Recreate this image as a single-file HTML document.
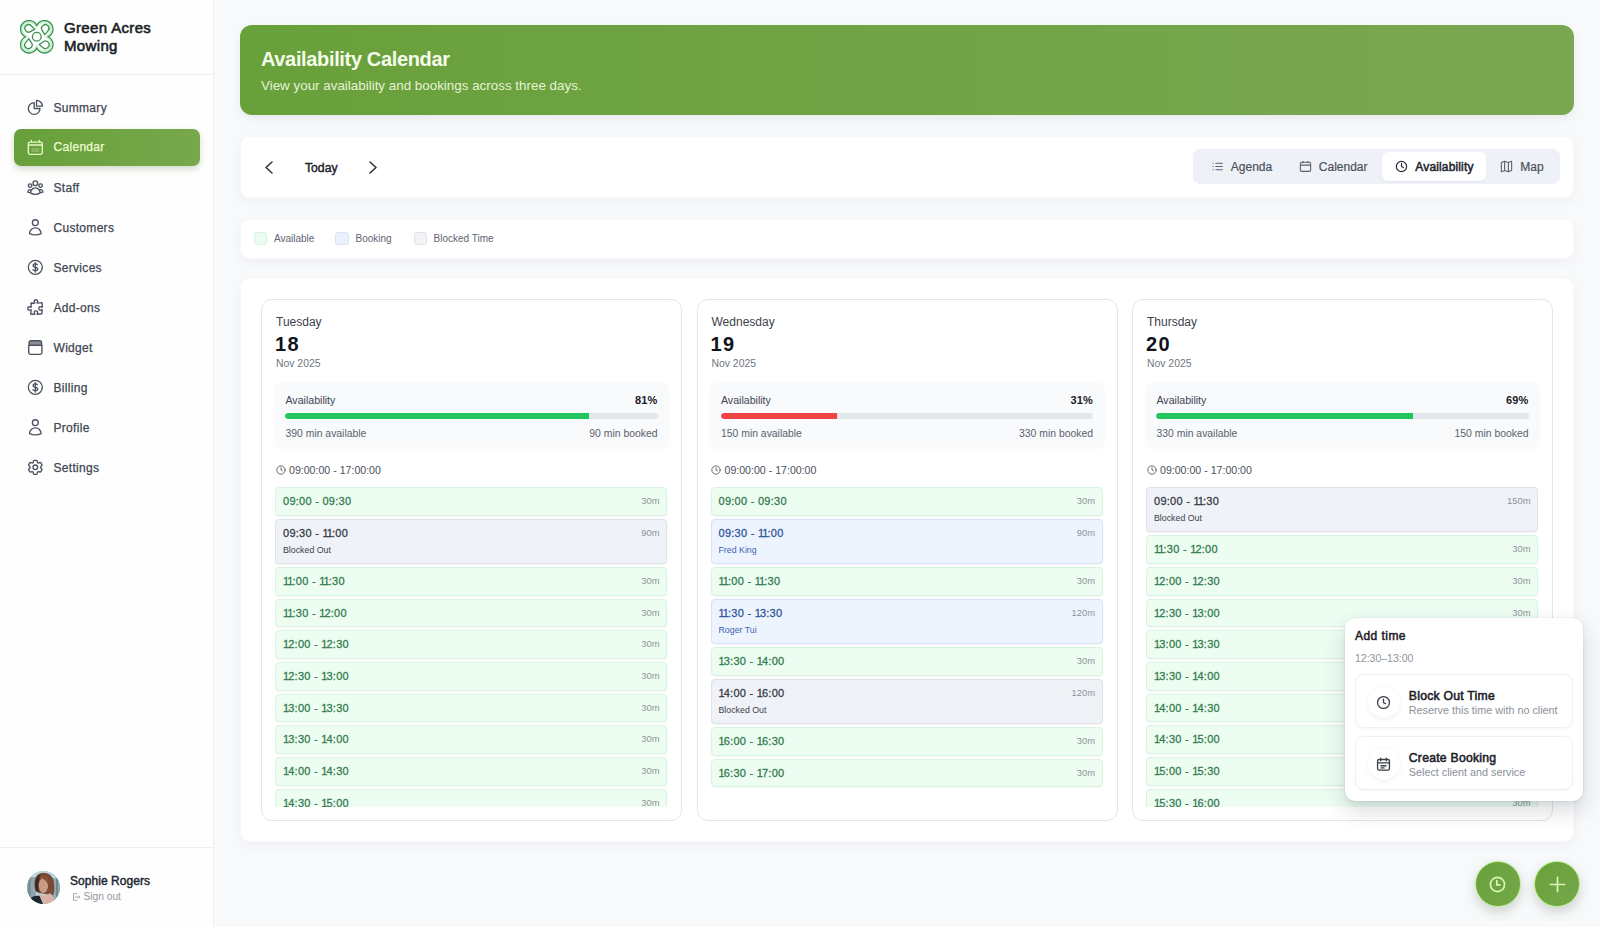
<!DOCTYPE html>
<html><head><meta charset="utf-8">
<style>
*{box-sizing:border-box;margin:0;padding:0}
html,body{width:1600px;height:927px;overflow:hidden}
body{font-family:"Liberation Sans",sans-serif;background:#f8f9fb;color:#111827;position:relative}
.abs{position:absolute}
svg{display:block}
/* sidebar */
.sb{position:absolute;left:0;top:0;width:214px;height:927px;background:#fefefe;border-right:1px solid #eef0f3}
.sb .hdr{position:absolute;left:0;top:0;width:213px;height:75px;border-bottom:1px solid #eceef1}
.logo{position:absolute;left:20px;top:20px;width:34px;height:34px}
.brand{position:absolute;left:64px;top:18.8px;font-size:15px;font-weight:400;line-height:18.6px;color:#1b1f27;letter-spacing:0.35px;-webkit-text-stroke:0.6px #1b1f27}
.nav{position:absolute;left:13.5px;width:186px;height:36.5px;border-radius:7px}
.nav .ic{position:absolute}
.nav .tx{position:absolute;left:40px;top:0;line-height:36.5px;font-size:12px;letter-spacing:0.3px;color:#3f4551;-webkit-text-stroke:0.25px #3f4551}
.nav.act{background:linear-gradient(90deg,#67a03a,#77a84c);box-shadow:0 3px 6px rgba(60,90,30,.22)}
.nav.act .tx{color:#eefcd3;-webkit-text-stroke:0.25px #eefcd3}
.user{position:absolute;left:0;top:847px;width:213px;border-top:1px solid #eceef1;height:80px}
.avatar{position:absolute;left:27px;top:871px;width:33px;height:33px;border-radius:50%;overflow:hidden;background:#8fb0bd}
.uname{position:absolute;left:70px;top:874.2px;font-size:12px;font-weight:400;color:#232833;-webkit-text-stroke:0.45px #232833;letter-spacing:0.05px}
.signout{position:absolute;left:71px;top:891px;font-size:10.2px;color:#9197a0}
/* main */
.banner{position:absolute;left:240px;top:25px;width:1334px;height:89.5px;border-radius:12px;background:linear-gradient(90deg,#68a03a 0%,#71a446 50%,#7aa752 100%);box-shadow:0 4px 10px rgba(15,23,42,.06)}
.banner h1{position:absolute;left:21px;top:22px;font-size:20px;font-weight:700;color:#f5fbea;letter-spacing:-0.35px;line-height:24px}
.banner p{position:absolute;left:21px;top:53px;font-size:13.4px;color:#e5f3d3;line-height:16px}
.card{position:absolute;background:#fff;border-radius:9px;border:1px solid rgba(15,23,42,.03);box-shadow:0 4px 12px rgba(15,23,42,.04)}
.toolbar{left:240px;top:136px;width:1334px;height:62px}
.legend{left:240px;top:218.5px;width:1334px;height:40px}
.calcard{left:240px;top:278px;width:1334px;height:564px}
.seg{position:absolute;left:952.3px;top:12.3px;width:367px;height:35px;border-radius:7px;background:#eef1f5}
.seg .pill{position:absolute;left:189px;top:3px;width:104px;height:29px;border-radius:6px;background:#fff;box-shadow:0 1px 2px rgba(0,0,0,.05)}
.seg .it{position:absolute;top:0.3px;line-height:35px;font-size:12px;color:#4a5261;-webkit-text-stroke:0.2px #4a5261}
.seg svg{position:absolute;top:10.5px;width:13px;height:13px}
.lg-sw{position:absolute;top:12.3px;width:13.5px;height:13.5px;border-radius:3px}
.lg-tx{position:absolute;top:-0.8px;line-height:39px;font-size:10px;color:#5e6573}
/* day cards */
.day{position:absolute;top:20px;width:421px;height:522px;border:1.5px solid #e4e6ea;border-radius:11px;background:#fff;overflow:hidden}
.day .dn{position:absolute;left:14px;top:15px;font-size:12px;color:#3c424d;line-height:14px}
.day .dd{position:absolute;left:13px;top:32.5px;font-size:20px;font-weight:700;color:#0f131a;line-height:22px;letter-spacing:1.3px}
.day .dm{position:absolute;left:14px;top:58px;font-size:10.4px;color:#70767f;line-height:12px}
.avbox{position:absolute;left:12.5px;top:83.3px;width:393.5px;height:64px;border-radius:6px;background:#f8fafc;box-shadow:0 1px 4px rgba(20,30,50,.04)}
.avbox .l{position:absolute;left:11px;top:10.7px;font-size:10.6px;color:#3e4450;line-height:12px}
.avbox .r{position:absolute;right:10.5px;top:10.5px;font-size:11px;letter-spacing:0.2px;font-weight:700;color:#1c2028;line-height:12px}
.avbox .bar{position:absolute;left:10.5px;top:30.2px;width:372.5px;height:6px;border-radius:3px;background:#e3e6ea;overflow:hidden}
.avbox .bar i{position:absolute;left:0;top:0;height:6px;border-radius:3px 0 0 3px}
.avbox .bl{position:absolute;left:11px;top:45px;font-size:10.4px;color:#5b616c;line-height:12px}
.avbox .br{position:absolute;right:10.5px;top:45px;font-size:10.4px;color:#5b616c;line-height:12px}
.hrs{position:absolute;left:14px;top:164px;font-size:10.6px;color:#4b515c;line-height:12px}
.hrs svg{position:absolute;left:-0.5px;top:0.5px}
.hrs span{margin-left:13px}
.list{position:absolute;left:13px;top:187px;width:393px;height:319.5px;overflow:hidden}
.sl{position:absolute;left:0;width:392px;border-radius:4px;border:1px solid #d9f3e1;background:#edfdf2;box-shadow:0 1px 1.5px rgba(15,23,42,.035)}
.sl .t{position:absolute;left:7px;top:7px;font-size:11px;font-weight:400;color:#337b4e;line-height:12px;letter-spacing:0.27px;-webkit-text-stroke:0.28px #337b4e}
.sl .m{position:absolute;right:6.5px;top:8px;font-size:9.4px;color:#8d939b;line-height:10px}
.sl .s{position:absolute;left:7px;top:25px;font-size:8.8px;color:#3b414b;line-height:10px}
.sl.bk{background:#eff2f7;border-color:#dde1e8}
.sl.bk .t{color:#353b46;-webkit-text-stroke-color:#353b46}
.sl.bo{background:#edf4fe;border-color:#d6e2f3}
.sl.bo .t{color:#2f559a;-webkit-text-stroke-color:#2f559a}
.sl.bo .s{color:#3a64b3}
.sl .t b.o{font-weight:inherit;letter-spacing:-0.95px}
.sh{height:28.66px}.lo{height:45.3px}
/* popover */
.pop{position:absolute;left:1345px;top:617.5px;width:238px;height:183.5px;background:#fff;border-radius:10px;box-shadow:0 10px 22px rgba(20,30,50,.16),0 2px 5px rgba(20,30,50,.06),0 0 0 1px rgba(0,0,0,.025)}
.pop .h{position:absolute;left:10px;top:11.5px;font-size:12px;font-weight:400;color:#1c2028;line-height:14px;letter-spacing:0.45px;-webkit-text-stroke:0.5px #1c2028}
.pop .tm{position:absolute;left:10px;top:34.3px;font-size:10.5px;color:#8d939b;line-height:12px}
.opt{position:absolute;left:10px;width:217.5px;height:54px;border-radius:9px;background:#fff;border:1px solid #eef0f3;box-shadow:0 1px 3px rgba(0,0,0,.03)}
.opt .c{position:absolute;left:11.5px;top:11px;width:32px;height:32px;border-radius:50%;background:#fff;box-shadow:0 1px 4px rgba(0,0,0,.07)}
.opt .c svg{position:absolute;left:8.5px;top:8.5px;width:15px;height:15px}
.opt .a{position:absolute;left:52.8px;top:13.9px;font-size:12.2px;font-weight:400;color:#1c2028;line-height:14px;letter-spacing:0.25px;-webkit-text-stroke:0.55px #1c2028}
.opt .b{position:absolute;left:52.8px;top:28.8px;font-size:10.8px;color:#8a9099;line-height:12px}
.fab{position:absolute;top:861px;width:46px;height:46px;border-radius:50%;background:linear-gradient(135deg,#68a03a,#74a84a);border:1px solid #b9ec8c;box-shadow:0 5px 12px rgba(40,60,30,.2)}
.fab svg{position:absolute;left:13.5px;top:13.5px}
</style></head><body>

<!-- SIDEBAR -->
<div class="sb">
  <div class="hdr"></div>
  <svg class="logo" viewBox="0 0 34 34" fill="none">
    <path d="M16.75 5.51A8.5 8.5 0 1 1 27.99 16.75A8.5 8.5 0 1 1 16.75 27.99A8.5 8.5 0 1 1 5.51 16.75A8.5 8.5 0 1 1 16.75 5.51Z" stroke="#c6f0cf" stroke-width="2.4" transform="translate(16.75 16.75) scale(0.9) translate(-16.75 -16.75)"/>
    <g stroke="#3a9150" stroke-width="1.3" stroke-linejoin="round">
    <path d="M16.75 5.51A8.5 8.5 0 1 1 27.99 16.75A8.5 8.5 0 1 1 16.75 27.99A8.5 8.5 0 1 1 5.51 16.75A8.5 8.5 0 1 1 16.75 5.51Z"/>
    <circle cx="16.8" cy="16.8" r="4.4"/>
    <path d="M14.76 9.14L10.44 11.61A3.7 3.7 0 1 1 11.15 5.72Z"/><path d="M24.68 14.57L22.13 10.30A3.7 3.7 0 1 1 28.03 10.89Z"/><path d="M8.71 18.71L11.48 22.84A3.7 3.7 0 1 1 5.55 22.55Z"/><path d="M19.21 24.49L23.34 21.72A3.7 3.7 0 1 1 23.05 27.65Z"/>
    </g>
  </svg>
  <div class="brand">Green Acres<br>Mowing</div>

  <div class="nav" style="top:89.5px">
    <svg class="ic" style="left:12.46px;top:8.91px;width:18.67px;height:18.67px" viewBox="0 0 24 24" fill="none" stroke="#4b5260" stroke-width="1.75" stroke-linecap="round" stroke-linejoin="round"><path d="M10.5 6a7.5 7.5 0 1 0 7.5 7.5h-7.5V6Z"/><path d="M13.5 10.5H21A7.5 7.5 0 0 0 13.5 3v7.5Z"/></svg>
    <div class="tx">Summary</div>
  </div>
  <div class="nav act" style="top:129.3px">
    <svg class="ic" style="left:12.46px;top:8.91px;width:18.67px;height:18.67px" viewBox="0 0 24 24" fill="none" stroke="#e6f9c4" stroke-width="1.75" stroke-linecap="round" stroke-linejoin="round"><path d="M6.75 3v2.25M17.25 3v2.25M3 18.75V7.5a2.25 2.25 0 0 1 2.25-2.25h13.5A2.25 2.25 0 0 1 21 7.5v11.25m-18 0A2.25 2.25 0 0 0 5.25 21h13.5A2.25 2.25 0 0 0 21 18.75m-18 0v-7.5A2.25 2.25 0 0 1 5.25 9h13.5A2.25 2.25 0 0 1 21 11.25v7.5"/><path d="M7 12.5h10v5.5H7z" fill="#8fb86a" stroke="none" opacity=".8"/></svg>
    <div class="tx">Calendar</div>
  </div>
  <div class="nav" style="top:169.5px">
    <svg class="ic" style="left:12.46px;top:8.91px;width:18.67px;height:18.67px" viewBox="0 0 24 24" fill="none" stroke="#4b5260" stroke-width="1.75" stroke-linecap="round" stroke-linejoin="round"><path d="M18 18.72a9.094 9.094 0 0 0 3.741-.479 3 3 0 0 0-4.682-2.72m.94 3.198.001.031c0 .225-.012.447-.037.666A11.944 11.944 0 0 1 12 21c-2.17 0-4.207-.576-5.963-1.584A6.062 6.062 0 0 1 6 18.719m12 0a5.971 5.971 0 0 0-.941-3.197m0 0A5.995 5.995 0 0 0 12 12.75a5.995 5.995 0 0 0-5.058 2.772m0 0a3 3 0 0 0-4.681 2.72 8.986 8.986 0 0 0 3.74.477m.94-3.197a5.971 5.971 0 0 0-.94 3.197M15 6.75a3 3 0 1 1-6 0 3 3 0 0 1 6 0Zm6 3a2.25 2.25 0 1 1-4.5 0 2.25 2.25 0 0 1 4.5 0Zm-13.5 0a2.25 2.25 0 1 1-4.5 0 2.25 2.25 0 0 1 4.5 0Z"/></svg>
    <div class="tx">Staff</div>
  </div>
  <div class="nav" style="top:209.5px">
    <svg class="ic" style="left:12.46px;top:8.91px;width:18.67px;height:18.67px" viewBox="0 0 24 24" fill="none" stroke="#4b5260" stroke-width="1.75" stroke-linecap="round" stroke-linejoin="round"><path d="M15.75 6a3.75 3.75 0 1 1-7.5 0 3.75 3.75 0 0 1 7.5 0ZM4.501 20.118a7.5 7.5 0 0 1 14.998 0A17.933 17.933 0 0 1 12 21.75c-2.676 0-5.216-.584-7.499-1.632Z"/></svg>
    <div class="tx">Customers</div>
  </div>
  <div class="nav" style="top:249.5px">
    <svg class="ic" style="left:12.46px;top:8.91px;width:18.67px;height:18.67px" viewBox="0 0 24 24" fill="none" stroke="#4b5260" stroke-width="1.75" stroke-linecap="round" stroke-linejoin="round"><path d="M12 6v12m-3-2.818.879.659c1.171.879 3.07.879 4.242 0 1.172-.879 1.172-2.303 0-3.182C13.536 12.219 12.768 12 12 12c-.725 0-1.45-.22-2.003-.659-1.106-.879-1.106-2.303 0-3.182s2.9-.879 4.006 0l.415.33M21 12a9 9 0 1 1-18 0 9 9 0 0 1 18 0Z"/></svg>
    <div class="tx">Services</div>
  </div>
  <div class="nav" style="top:289.5px">
    <svg class="ic" style="left:12.46px;top:8.91px;width:18.67px;height:18.67px" viewBox="0 0 24 24" fill="none" stroke="#4b5260" stroke-width="1.75" stroke-linecap="round" stroke-linejoin="round"><path d="M14.25 6.087c0-.355.186-.676.401-.959.221-.29.349-.634.349-1.003 0-1.036-1.007-1.875-2.25-1.875s-2.25.84-2.25 1.875c0 .369.128.713.349 1.003.215.283.401.604.401.959v0a.64.64 0 0 1-.657.643 48.39 48.39 0 0 1-4.163-.3c.186 1.613.293 3.25.315 4.907a.656.656 0 0 1-.658.663v0c-.355 0-.676-.186-.959-.401a1.647 1.647 0 0 0-1.003-.349c-1.036 0-1.875 1.007-1.875 2.25s.84 2.250 1.875 2.25c.369 0 .713-.128 1.003-.349.283-.215.604-.401.959-.401v0c.31 0 .555.26.532.57a48.039 48.039 0 0 1-.642 5.056c1.518.19 3.058.309 4.616.354a.64.64 0 0 0 .657-.643v0c0-.355-.186-.676-.401-.959a1.647 1.647 0 0 1-.349-1.003c0-1.035 1.008-1.875 2.25-1.875 1.243 0 2.25.84 2.25 1.875 0 .369-.128.713-.349 1.003-.215.283-.4.604-.4.959v0c0 .333.277.599.61.58a48.1 48.1 0 0 0 5.427-.63 48.05 48.05 0 0 0 .582-4.717.532.532 0 0 0-.533-.57v0c-.355 0-.676.186-.959.401-.29.221-.634.349-1.003.349-1.035 0-1.875-1.007-1.875-2.25s.84-2.25 1.875-2.25c.37 0 .713.128 1.003.349.283.215.604.401.96.401v0a.656.656 0 0 0 .658-.663 48.422 48.422 0 0 0-.37-5.360c-1.886.342-3.81.574-5.766.689a.578.578 0 0 1-.61-.58v0Z"/></svg>
    <div class="tx">Add-ons</div>
  </div>
  <div class="nav" style="top:329.5px">
    <svg class="ic" style="left:12.46px;top:8.91px;width:18.67px;height:18.67px" viewBox="0 0 24 24" fill="none" stroke="#4b5260" stroke-width="1.75" stroke-linecap="round" stroke-linejoin="round"><path d="M6.5 3.5h11a2.5 2.5 0 0 1 2.5 2.5V9.5H4V6a2.5 2.5 0 0 1 2.5-2.5Z" fill="#8a8f98"/><path d="M3.5 9.5h17v9a2.5 2.5 0 0 1-2.5 2.5H6a2.5 2.5 0 0 1-2.5-2.5Z"/></svg>
    <div class="tx">Widget</div>
  </div>
  <div class="nav" style="top:369.5px">
    <svg class="ic" style="left:12.46px;top:8.91px;width:18.67px;height:18.67px" viewBox="0 0 24 24" fill="none" stroke="#4b5260" stroke-width="1.75" stroke-linecap="round" stroke-linejoin="round"><path d="M12 6v12m-3-2.818.879.659c1.171.879 3.07.879 4.242 0 1.172-.879 1.172-2.303 0-3.182C13.536 12.219 12.768 12 12 12c-.725 0-1.45-.22-2.003-.659-1.106-.879-1.106-2.303 0-3.182s2.9-.879 4.006 0l.415.33M21 12a9 9 0 1 1-18 0 9 9 0 0 1 18 0Z"/></svg>
    <div class="tx">Billing</div>
  </div>
  <div class="nav" style="top:409.5px">
    <svg class="ic" style="left:12.46px;top:8.91px;width:18.67px;height:18.67px" viewBox="0 0 24 24" fill="none" stroke="#4b5260" stroke-width="1.75" stroke-linecap="round" stroke-linejoin="round"><path d="M15.75 6a3.75 3.75 0 1 1-7.5 0 3.75 3.75 0 0 1 7.5 0ZM4.501 20.118a7.5 7.5 0 0 1 14.998 0A17.933 17.933 0 0 1 12 21.75c-2.676 0-5.216-.584-7.499-1.632Z"/></svg>
    <div class="tx">Profile</div>
  </div>
  <div class="nav" style="top:449.5px">
    <svg class="ic" style="left:12.46px;top:8.91px;width:18.67px;height:18.67px" viewBox="0 0 24 24" fill="none" stroke="#4b5260" stroke-width="1.75" stroke-linecap="round" stroke-linejoin="round"><path d="M9.594 3.94c.09-.542.56-.94 1.11-.94h2.593c.55 0 1.02.398 1.11.94l.213 1.281c.063.374.313.686.645.87.074.04.147.083.22.127.325.196.72.257 1.075.124l1.217-.456a1.125 1.125 0 0 1 1.37.49l1.296 2.247a1.125 1.125 0 0 1-.26 1.431l-1.003.827c-.293.241-.438.613-.43.992a7.723 7.723 0 0 1 0 .255c-.008.378.137.75.43.991l1.004.827c.424.35.534.955.26 1.43l-1.298 2.247a1.125 1.125 0 0 1-1.369.491l-1.217-.456c-.355-.133-.75-.072-1.076.124a6.47 6.47 0 0 1-.22.128c-.331.183-.581.495-.644.869l-.213 1.281c-.09.543-.56.94-1.11.94h-2.594c-.55 0-1.019-.398-1.11-.94l-.213-1.281c-.062-.374-.312-.686-.644-.87a6.520 6.520 0 0 1-.22-.127c-.325-.196-.72-.257-1.076-.124l-1.217.456a1.125 1.125 0 0 1-1.369-.49l-1.297-2.247a1.125 1.125 0 0 1 .26-1.431l1.004-.827c.292-.24.437-.613.43-.991a6.932 6.932 0 0 1 0-.255c.007-.38-.138-.751-.43-.992l-1.004-.827a1.125 1.125 0 0 1-.26-1.43l1.297-2.247a1.125 1.125 0 0 1 1.37-.491l1.216.456c.356.133.751.072 1.076-.124.072-.044.146-.086.22-.128.332-.183.582-.495.644-.869l.214-1.28Z"/><path d="M15 12a3 3 0 1 1-6 0 3 3 0 0 1 6 0Z"/></svg>
    <div class="tx">Settings</div>
  </div>

  <div class="user"></div>
</div>
<div class="avatar">
  <svg width="33" height="33" viewBox="0 0 33 33">
    <defs><filter id="bl" x="-10%" y="-10%" width="120%" height="120%"><feGaussianBlur stdDeviation="0.55"/></filter></defs>
    <g filter="url(#bl)">
    <rect width="33" height="33" fill="#bcd9e3"/>
    <rect x="0" y="6" width="9" height="24" fill="#8fa6ae"/>
    <rect x="1.5" y="7" width="2" height="20" fill="#6f858d"/>
    <rect x="25" y="7" width="8" height="22" fill="#93aab3"/>
    <rect x="29" y="8" width="2" height="18" fill="#71878f"/>
    <path d="M7.5 14 C7 6 11 1.8 16.5 1.8 C22.5 1.8 27 6 27 13 C27.5 18 27.5 22 26 24 L21 23.5 L12 22 C9.5 21.5 8 19 7.5 14Z" fill="#7b4a36"/>
    <path d="M8 12 C8.5 7 11 4 14 3.5 C12 7 11.5 12 11.5 21 L9 20.5 C8.2 18 7.8 15 8 12Z" fill="#3e2a22"/>
    <ellipse cx="16.4" cy="14.5" rx="4.7" ry="7.4" fill="#c79c86"/>
    <path d="M12 6.5 C14 4.5 18 4.2 21 6 C22 9 21.5 12 21 14 C20 10 17 7.5 12 6.5Z" fill="#8a5038"/>
    <path d="M11 22 C13 25 20 25 23 22 L27 27 L27 33 L9 33 Z" fill="#d7b4a7"/>
    <path d="M3 28 C5 25 9 24.5 12.5 25 L16 33 L5 33Z" fill="#1e2832"/>
    </g>
  </svg>
</div>
<div class="uname">Sophie Rogers</div>
<svg class="abs" style="left:71px;top:892px" width="10" height="10" viewBox="0 0 24 24" fill="none" stroke="#a3a9b1" stroke-width="2.4" stroke-linecap="round" stroke-linejoin="round"><path d="M14 4H6v16h8M10 12h11M18 9l3 3-3 3"/></svg>
<div class="signout" style="left:83.5px">Sign out</div>

<!-- BANNER -->
<div class="banner">
  <h1>Availability Calendar</h1>
  <p>View your availability and bookings across three days.</p>
</div>

<!-- TOOLBAR -->
<div class="card toolbar">
  <svg class="abs" style="left:23.1px;top:23.8px" width="10" height="13" viewBox="0 0 10 13" fill="none" stroke="#2a2f38" stroke-width="1.5" stroke-linecap="round" stroke-linejoin="round"><path d="M8 1 2 6.5 8 12"/></svg>
  <div class="abs" style="left:64px;top:0;line-height:62px;font-size:12.2px;font-weight:400;color:#1d222b;-webkit-text-stroke:0.45px #1d222b">Today</div>
  <svg class="abs" style="left:126.6px;top:23.8px" width="10" height="13" viewBox="0 0 10 13" fill="none" stroke="#2a2f38" stroke-width="1.5" stroke-linecap="round" stroke-linejoin="round"><path d="M2 1 8 6.5 2 12"/></svg>
  <div class="seg">
    <div class="pill"></div>
    <svg style="left:17.5px" width="12" height="12" viewBox="0 0 24 24" fill="none" stroke="#5a6170" stroke-width="2" stroke-linecap="round"><path d="M9 6h12M9 12h12M9 18h12M3.5 6h.5M3.5 12h.5M3.5 18h.5"/></svg>
    <div class="it" style="left:37.5px">Agenda</div>
    <svg style="left:105.5px" width="12" height="12" viewBox="0 0 24 24" fill="none" stroke="#5a6170" stroke-width="2"><rect x="2.5" y="4" width="19" height="17" rx="2.5"/><path d="M2.5 9.5h19M7.5 2v4M16.5 2v4"/></svg>
    <div class="it" style="left:125.5px">Calendar</div>
    <svg style="left:202px" width="12" height="12" viewBox="0 0 24 24" fill="none" stroke="#262b35" stroke-width="2.2" stroke-linecap="round"><circle cx="12" cy="12" r="9.5"/><path d="M12 6.5V12l3.5 2"/></svg>
    <div class="it" style="left:222px;font-weight:400;color:#1d222b;-webkit-text-stroke:0.5px #1d222b;letter-spacing:0.15px">Availability</div>
    <svg style="left:307px" width="12" height="12" viewBox="0 0 24 24" fill="none" stroke="#5a6170" stroke-width="2" stroke-linejoin="round"><path d="M2.5 4.5 8.5 2.5l7 2 6-2v17l-6 2-7-2-6 2Z"/><path d="M8.5 2.5v17M15.5 4.5v17"/></svg>
    <div class="it" style="left:327px">Map</div>
  </div>
</div>

<!-- LEGEND -->
<div class="card legend">
  <div class="lg-sw" style="left:12.5px;background:#eafcf1;border:1px solid #d8f3e2"></div>
  <div class="lg-tx" style="left:33px">Available</div>
  <div class="lg-sw" style="left:94px;background:#ebf2fd;border:1px solid #d9e3f4"></div>
  <div class="lg-tx" style="left:114.5px">Booking</div>
  <div class="lg-sw" style="left:172.5px;background:#f1f3f6;border:1px solid #e0e3e8"></div>
  <div class="lg-tx" style="left:192.5px">Blocked Time</div>
</div>

<!-- CALENDAR -->
<div class="card calcard">
<div class="day" style="left:20px">
<div class="dn">Tuesday</div><div class="dd">18</div><div class="dm">Nov 2025</div>
<div class="avbox"><div class="l">Availability</div><div class="r">81%</div><div class="bar"><i style="width:81.5%;background:#22c55e"></i></div><div class="bl">390 min available</div><div class="br">90 min booked</div></div>
<div class="hrs"><svg width="10" height="10" viewBox="0 0 24 24" fill="none" stroke="#5f656f" stroke-width="2.3" stroke-linecap="round"><circle cx="12" cy="12" r="10"/><path d="M12 6.5V12l3.5 2"/></svg><span>09:00:00 - 17:00:00</span></div>
<div class="list">
<div class="sl sh" style="top:0.00px"><div class="t">09:00 - 09:30</div><div class="m">30m</div></div>
<div class="sl bk lo" style="top:31.66px"><div class="t">09:30 - <b class="o">1</b><b class="o">1</b>:00</div><div class="m">90m</div><div class="s">Blocked Out</div></div>
<div class="sl sh" style="top:79.96px"><div class="t"><b class="o">1</b><b class="o">1</b>:00 - <b class="o">1</b><b class="o">1</b>:30</div><div class="m">30m</div></div>
<div class="sl sh" style="top:111.62px"><div class="t"><b class="o">1</b><b class="o">1</b>:30 - <b class="o">1</b>2:00</div><div class="m">30m</div></div>
<div class="sl sh" style="top:143.28px"><div class="t"><b class="o">1</b>2:00 - <b class="o">1</b>2:30</div><div class="m">30m</div></div>
<div class="sl sh" style="top:174.94px"><div class="t"><b class="o">1</b>2:30 - <b class="o">1</b>3:00</div><div class="m">30m</div></div>
<div class="sl sh" style="top:206.60px"><div class="t"><b class="o">1</b>3:00 - <b class="o">1</b>3:30</div><div class="m">30m</div></div>
<div class="sl sh" style="top:238.26px"><div class="t"><b class="o">1</b>3:30 - <b class="o">1</b>4:00</div><div class="m">30m</div></div>
<div class="sl sh" style="top:269.92px"><div class="t"><b class="o">1</b>4:00 - <b class="o">1</b>4:30</div><div class="m">30m</div></div>
<div class="sl sh" style="top:301.58px"><div class="t"><b class="o">1</b>4:30 - <b class="o">1</b>5:00</div><div class="m">30m</div></div>
<div class="sl sh" style="top:333.24px"><div class="t"><b class="o">1</b>5:00 - <b class="o">1</b>5:30</div><div class="m">30m</div></div>
<div class="sl sh" style="top:364.90px"><div class="t"><b class="o">1</b>5:30 - <b class="o">1</b>6:00</div><div class="m">30m</div></div>
<div class="sl sh" style="top:396.56px"><div class="t"><b class="o">1</b>6:00 - <b class="o">1</b>6:30</div><div class="m">30m</div></div>
<div class="sl sh" style="top:428.22px"><div class="t"><b class="o">1</b>6:30 - <b class="o">1</b>7:00</div><div class="m">30m</div></div>
</div></div>
<div class="day" style="left:455.5px">
<div class="dn">Wednesday</div><div class="dd">19</div><div class="dm">Nov 2025</div>
<div class="avbox"><div class="l">Availability</div><div class="r">31%</div><div class="bar"><i style="width:31.2%;background:#ef4444"></i></div><div class="bl">150 min available</div><div class="br">330 min booked</div></div>
<div class="hrs"><svg width="10" height="10" viewBox="0 0 24 24" fill="none" stroke="#5f656f" stroke-width="2.3" stroke-linecap="round"><circle cx="12" cy="12" r="10"/><path d="M12 6.5V12l3.5 2"/></svg><span>09:00:00 - 17:00:00</span></div>
<div class="list">
<div class="sl sh" style="top:0.00px"><div class="t">09:00 - 09:30</div><div class="m">30m</div></div>
<div class="sl bo lo" style="top:31.66px"><div class="t">09:30 - <b class="o">1</b><b class="o">1</b>:00</div><div class="m">90m</div><div class="s">Fred King</div></div>
<div class="sl sh" style="top:79.96px"><div class="t"><b class="o">1</b><b class="o">1</b>:00 - <b class="o">1</b><b class="o">1</b>:30</div><div class="m">30m</div></div>
<div class="sl bo lo" style="top:111.62px"><div class="t"><b class="o">1</b><b class="o">1</b>:30 - <b class="o">1</b>3:30</div><div class="m">120m</div><div class="s">Roger Tui</div></div>
<div class="sl sh" style="top:159.92px"><div class="t"><b class="o">1</b>3:30 - <b class="o">1</b>4:00</div><div class="m">30m</div></div>
<div class="sl bk lo" style="top:191.58px"><div class="t"><b class="o">1</b>4:00 - <b class="o">1</b>6:00</div><div class="m">120m</div><div class="s">Blocked Out</div></div>
<div class="sl sh" style="top:239.88px"><div class="t"><b class="o">1</b>6:00 - <b class="o">1</b>6:30</div><div class="m">30m</div></div>
<div class="sl sh" style="top:271.54px"><div class="t"><b class="o">1</b>6:30 - <b class="o">1</b>7:00</div><div class="m">30m</div></div>
</div></div>
<div class="day" style="left:891px">
<div class="dn">Thursday</div><div class="dd">20</div><div class="dm">Nov 2025</div>
<div class="avbox"><div class="l">Availability</div><div class="r">69%</div><div class="bar"><i style="width:68.9%;background:#22c55e"></i></div><div class="bl">330 min available</div><div class="br">150 min booked</div></div>
<div class="hrs"><svg width="10" height="10" viewBox="0 0 24 24" fill="none" stroke="#5f656f" stroke-width="2.3" stroke-linecap="round"><circle cx="12" cy="12" r="10"/><path d="M12 6.5V12l3.5 2"/></svg><span>09:00:00 - 17:00:00</span></div>
<div class="list">
<div class="sl bk lo" style="top:0.00px"><div class="t">09:00 - <b class="o">1</b><b class="o">1</b>:30</div><div class="m">150m</div><div class="s">Blocked Out</div></div>
<div class="sl sh" style="top:48.30px"><div class="t"><b class="o">1</b><b class="o">1</b>:30 - <b class="o">1</b>2:00</div><div class="m">30m</div></div>
<div class="sl sh" style="top:79.96px"><div class="t"><b class="o">1</b>2:00 - <b class="o">1</b>2:30</div><div class="m">30m</div></div>
<div class="sl sh" style="top:111.62px"><div class="t"><b class="o">1</b>2:30 - <b class="o">1</b>3:00</div><div class="m">30m</div></div>
<div class="sl sh" style="top:143.28px"><div class="t"><b class="o">1</b>3:00 - <b class="o">1</b>3:30</div><div class="m">30m</div></div>
<div class="sl sh" style="top:174.94px"><div class="t"><b class="o">1</b>3:30 - <b class="o">1</b>4:00</div><div class="m">30m</div></div>
<div class="sl sh" style="top:206.60px"><div class="t"><b class="o">1</b>4:00 - <b class="o">1</b>4:30</div><div class="m">30m</div></div>
<div class="sl sh" style="top:238.26px"><div class="t"><b class="o">1</b>4:30 - <b class="o">1</b>5:00</div><div class="m">30m</div></div>
<div class="sl sh" style="top:269.92px"><div class="t"><b class="o">1</b>5:00 - <b class="o">1</b>5:30</div><div class="m">30m</div></div>
<div class="sl sh" style="top:301.58px"><div class="t"><b class="o">1</b>5:30 - <b class="o">1</b>6:00</div><div class="m">30m</div></div>
<div class="sl sh" style="top:333.24px"><div class="t"><b class="o">1</b>6:00 - <b class="o">1</b>6:30</div><div class="m">30m</div></div>
<div class="sl sh" style="top:364.90px"><div class="t"><b class="o">1</b>6:30 - <b class="o">1</b>7:00</div><div class="m">30m</div></div>
</div></div>
</div>

<!-- POPOVER -->
<div class="pop">
  <div class="h">Add time</div>
  <div class="tm">12:30–13:00</div>
  <div class="opt" style="top:56.5px">
    <div class="c"><svg width="13" height="13" viewBox="0 0 24 24" fill="none" stroke="#3a3f49" stroke-width="2.1" stroke-linecap="round"><circle cx="12" cy="12" r="9.5"/><path d="M12 6.5V12l3.5 2"/></svg></div>
    <div class="a">Block Out Time</div>
    <div class="b">Reserve this time with no client</div>
  </div>
  <div class="opt" style="top:118.5px">
    <div class="c"><svg width="13" height="13" viewBox="0 0 24 24" fill="none" stroke="#3a3f49" stroke-width="2.1" stroke-linecap="round"><rect x="2.5" y="4" width="19" height="17" rx="2.5"/><path d="M2.5 9.5h19M7.5 2v4M16.5 2v4M8 14h8M8 17.5h5"/></svg></div>
    <div class="a">Create Booking</div>
    <div class="b">Select client and service</div>
  </div>
</div>

<!-- FABS -->
<div class="fab" style="left:1474.5px">
  <svg width="17" height="17" viewBox="0 0 24 24" fill="none" stroke="#d9f7b4" stroke-width="2.4" stroke-linecap="round"><circle cx="12" cy="12" r="10"/><path d="M11 6.5V12.5h4.5"/></svg>
</div>
<div class="fab" style="left:1534.3px">
  <svg width="17" height="17" viewBox="0 0 24 24" fill="none" stroke="#d9f7b4" stroke-width="2.4" stroke-linecap="round"><path d="M12 2v20M2 12h20"/></svg>
</div>

</body></html>
